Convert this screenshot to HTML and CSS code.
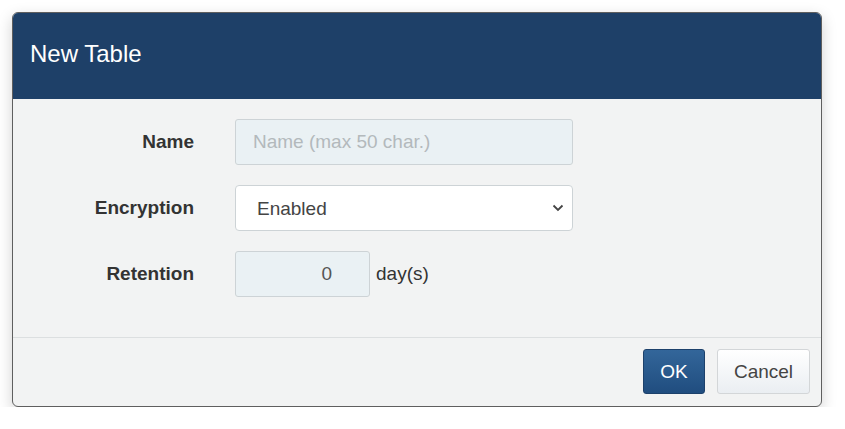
FILE: index.html
```html
<!DOCTYPE html>
<html>
<head>
<meta charset="utf-8">
<link rel="stylesheet" href="styles.css">
</head>
<body>
<div class="page">
  <div class="modal">
    <div class="modal-header">
      <h1 class="modal-title">New Table</h1>
    </div>
    <div class="modal-body">
      <div class="form">
        <label class="label">Name</label>
        <div class="field"><input class="input input-name" type="text" placeholder="Name (max 50 char.)"></div>
        <label class="label">Encryption</label>
        <div class="field">
          <div class="select-wrap">
            <select class="select"><option>Enabled</option></select>
            <svg class="chevron" width="12" height="8" viewBox="0 0 12 8"><path d="M1.5 1.5 L6 6 L10.5 1.5" fill="none" stroke="#444" stroke-width="1.8"/></svg>
          </div>
        </div>
        <label class="label">Retention</label>
        <div class="field field-inline">
          <input class="input input-num" type="text" value="0">
          <span class="unit">day(s)</span>
        </div>
      </div>
    </div>
    <div class="modal-footer">
      <button class="btn btn-primary">OK</button>
      <button class="btn btn-default">Cancel</button>
    </div>
  </div>
</div>
</body>
</html>
```
FILE: styles.css
```css
html, body {
  margin: 0;
  padding: 0;
  background: #ffffff;
  font-family: "Liberation Sans", Arial, sans-serif;
}
.page {
  padding: 12px 0 0 12px;
}
.modal {
  width: 808px;
  border: 1px solid #5f5f5f;
  border-radius: 6px;
  overflow: hidden;
  background: #f2f3f3;
  box-shadow: 0 5px 15px rgba(0,0,0,0.18);
}
.modal-header {
  background: #1e4068;
  height: 86px;
  display: flex;
  align-items: center;
  padding-left: 17px;
}
.modal-title {
  margin: 0;
  color: #ffffff;
  font-size: 24px;
  font-weight: normal;
  position: relative;
  top: -2px;
}
.modal-body {
  padding: 20px 0 40px 0;
  border-bottom: 1px solid #dcdfe0;
}
.form {
  display: grid;
  grid-template-columns: 181px 1fr;
  column-gap: 41px;
  row-gap: 20px;
  align-items: center;
}
.label {
  text-align: right;
  font-weight: bold;
  font-size: 19px;
  color: #333333;
}
.field {
  display: flex;
  align-items: center;
}
.input {
  box-sizing: border-box;
  height: 46px;
  border: 1px solid #cdd3d6;
  border-radius: 3px;
  background: #eaf1f4;
  font-family: "Liberation Sans", Arial, sans-serif;
  font-size: 19px;
  color: #555555;
  outline: none;
  margin: 0;
}
.input-name {
  width: 338px;
  padding: 0 17px;
}
.input-name::placeholder {
  color: #b3b9bc;
}
.input-num {
  width: 135px;
  text-align: right;
  padding: 0 37px 0 10px;
}
.unit {
  margin-left: 6px;
  font-size: 19px;
  color: #333333;
}
.select-wrap {
  position: relative;
  width: 338px;
  height: 46px;
}
.select {
  appearance: none;
  -webkit-appearance: none;
  box-sizing: border-box;
  width: 338px;
  height: 46px;
  border: 1px solid #cdd3d6;
  border-radius: 4px;
  background: #ffffff;
  padding: 0 21px;
  font-family: "Liberation Sans", Arial, sans-serif;
  font-size: 19px;
  color: #444444;
  outline: none;
  margin: 0;
}
.chevron {
  position: absolute;
  right: 9px;
  top: 19px;
  pointer-events: none;
}
.modal-footer {
  display: flex;
  justify-content: flex-end;
  gap: 12px;
  padding: 11px 11px 12px 0;
}
.btn {
  height: 45px;
  border-radius: 3px;
  font-family: "Liberation Sans", Arial, sans-serif;
  font-size: 19px;
  margin: 0;
  cursor: pointer;
}
.btn-primary {
  width: 62px;
  border: 1px solid #1d416b;
  background: linear-gradient(#33669a, #204d7f);
  color: #ffffff;
}
.btn-default {
  width: 93px;
  border: 1px solid #d3d6d8;
  background: linear-gradient(#ffffff, #eaeef2);
  color: #444444;
}
```
